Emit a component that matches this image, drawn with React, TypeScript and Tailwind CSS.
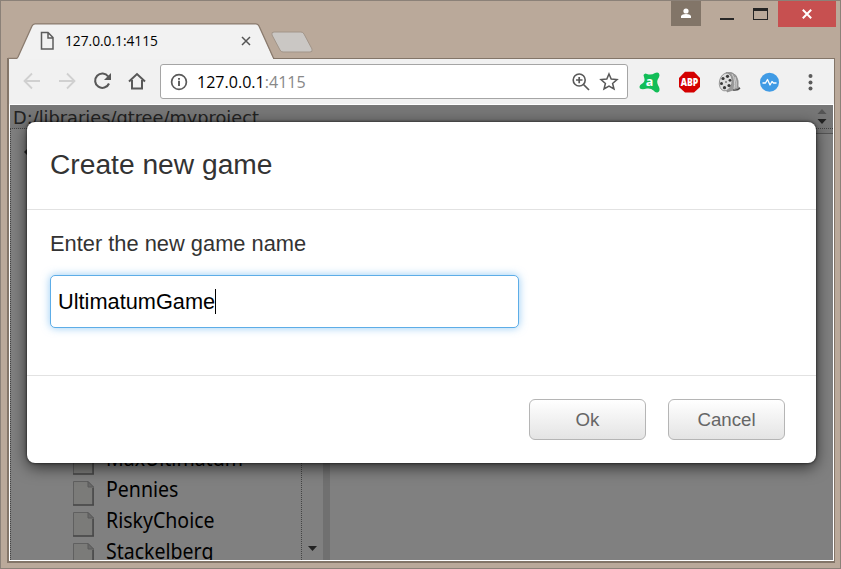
import React from 'react';

function TreeRow({ name }: { name: string }) {
  return (
    <div className="flex h-[31px] items-start pl-[62px]">
      <svg width="21" height="25" viewBox="0 0 21 25" className="mt-[6px] shrink-0">
        <path d="M.5 .5H15L20.5 6V24H.5Z" fill="#7b7b79" stroke="#606060" />
        <path d="M15 .5V6H20.5Z" fill="#696969" stroke="#5b5b5b" />
        <path d="M0 24H21M20 7V24" stroke="#484848" strokeWidth="1.5" />
      </svg>
      <span className="-mt-px ml-[12px] origin-left scale-x-[0.93] whitespace-nowrap font-['Noto_Sans',sans-serif] text-[21px] leading-[31px] text-black">{name}</span>
    </div>
  );
}

function Titlebar() {
  return (
    <header className="relative flex h-[57px] shrink-0">
      <svg className="absolute left-0 top-0" width="330" height="58" viewBox="1 1 330 58" fill="none">
        <path d="M17 59L18 57L32 26Q33 24 35 24H256Q258 24 259 26L273 58V59Z" fill="#f2f2f2" />
        <path d="M8 58.5H16Q17 58.5 18 57L32 26Q33 23.8 35 23.8H256Q258 23.8 259 26L273 57L274 58.5" stroke="#8a7b6e" strokeWidth="1.3" />
        <path d="M274 32H301Q303 32 304 34L312 49Q313 52 310 52H283Q281 52 280 50L272 35Q271 32 274 32Z" fill="#cac7c4" stroke="#a29589" />
        <path d="M41.5 32.5H48L53 37.5V49H41.5ZM48 33V38H53" stroke="#5d5d5d" strokeWidth="1.5" />
        <path d="M242 37L250 45M250 37L242 45" stroke="#555" strokeWidth="1.5" />
      </svg>
      <div className="relative ml-[64px] mt-[29px] flex h-[20px] items-center">
        <span className="origin-left scale-x-[0.98] font-['Open_Sans',sans-serif] text-[14px] text-black">127.0.0.1:4115</span>
      </div>
      <div className="ml-auto mr-[4px] flex h-[26px]">
        <div className="flex h-[25px] w-[30px] justify-center bg-[#827568] pt-[7px]">
          <svg width="10" height="11"><circle cx="5" cy="3" r="2.6" fill="#fff" /><path d="M0 10V8Q1 6 5 6T10 8V10Z" fill="#fff" /></svg>
        </div>
        <div className="flex w-[49px] pl-[19px] pt-[17px]"><div className="h-[2px] w-[14px] bg-[#282828]" /></div>
        <div className="flex w-[28px] pl-[3px] pt-[7px]"><div className="h-[12px] w-[15px] border border-t-[3px] border-[#242424]" /></div>
        <div className="flex w-[58px] justify-center bg-[#c75050] pt-[8px]">
          <svg width="10" height="10"><path d="M.8 .8L9.2 9.2M9.2 .8L.8 9.2" stroke="#fff" strokeWidth="2" /></svg>
        </div>
      </div>
    </header>
  );
}

function Toolbar() {
  return (
    <nav className="flex h-[46px] shrink-0 items-center border-b border-[#aaa] bg-[#f1f1f1]">
      <svg width="142" height="24" viewBox="19 70 142 24" fill="none" className="ml-[10px] shrink-0">
        <path d="M40 81H25M32 73.5L24.5 81L32 88.5M59 81H74M67 73.5L74.5 81L67 88.5" stroke="#d0d0d0" strokeWidth="1.8" />
        <path d="M108.2 76.5A7.2 7.2 0 1 0 109 83.5" stroke="#585858" strokeWidth="2.1" />
        <path d="M111 73V80H104Z" fill="#585858" />
        <path d="M129 81.5L137 74L145 81.5M132 80V88.4H142V80" stroke="#585858" strokeWidth="2" />
      </svg>
      <div className="-ml-px flex h-[35px] w-[468px] shrink-0 items-center rounded-[3px] border border-[#a5a5a5] bg-white pl-[9px]">
        <svg width="18" height="18" fill="none"><circle cx="9" cy="9" r="7.4" stroke="#5a5a5a" strokeWidth="1.7" /><path d="M9 7.8V13M9 5V6.7" stroke="#5a5a5a" strokeWidth="1.9" /></svg>
        <div className="ml-[9px] w-[365px] whitespace-nowrap font-['Open_Sans',sans-serif] text-[17px] leading-[30px]">
          <span className="inline-block origin-left scale-x-[0.945] text-black">127.0.0.1<span className="text-[#888]">:4115</span></span>
        </div>
        <svg width="53" height="22" viewBox="570 71 53 22" fill="none" className="ml-[8px]">
          <circle cx="579.2" cy="80" r="6" stroke="#585858" strokeWidth="1.6" />
          <path d="M583.5 84.5L589 90M576 80H582.5M579.2 77V83.2" stroke="#585858" strokeWidth="1.7" />
          <path d="M609 74L611.2 79.1L617 79.6L612.6 83.4L614 89L609 86L604 89L605.4 83.4L601 79.6L606.8 79.1Z" stroke="#585858" strokeWidth="1.5" />
        </svg>
      </div>
      <svg width="205" height="28" viewBox="628 67 205 28" fill="none" className="shrink-0">
        <path d="M643.5 74Q645 71.5 647 73Q651 74.5 655 72Q659 70.5 659.5 74Q659.5 76 657.5 79Q656.5 82 659 86Q660.5 90 658 91.2Q655.5 92 653.5 89.5Q651 87 647 87.5Q642 89 640 87.5Q638.5 85 641.5 83Q645 81 644.5 78Z" fill="#12bd57" />
        <text x="645.8" y="84.7" fill="white" fontSize="12.5" fontWeight="700" fontFamily="Open Sans, sans-serif">a</text>
        <path d="M685 70.8H694L700 77V86L694 91.5H685L679 86V77Z" fill="#d40000" />
        <text x="680.8" y="85" fill="white" fontSize="10.5" fontWeight="800" fontFamily="Open Sans, sans-serif" textLength="17.5" lengthAdjust="spacingAndGlyphs">ABP</text>
        <path d="M726 71.5Q732 70 736 74.5Q739 79 738 85.5L740 87Q739 90 735 88.5L727 91Z" fill="#999" stroke="#888" strokeWidth=".7" />
        <path d="M732 73Q736 79 734 88M735 76Q737 81 736 87" stroke="#ddd" strokeWidth=".8" />
        <path d="M733 89Q737 90 740 87" stroke="#444" strokeWidth="1.2" />
        <ellipse cx="725.7" cy="81" rx="6.3" ry="9" transform="rotate(12 725.7 81)" fill="#ddd" stroke="#888" strokeWidth=".8" />
        <g fill="#383838"><circle cx="727.5" cy="75.3" r="1.6" /><circle cx="723" cy="77.5" r="1.6" /><circle cx="721.5" cy="82.5" r="1.5" /><circle cx="724.5" cy="86.7" r="1.6" /><circle cx="729" cy="84.5" r="1.6" /><circle cx="730" cy="79.3" r="1.4" /><circle cx="726" cy="81" r=".8" /></g>
        <circle cx="769.5" cy="81.2" r="9.5" fill="#409be5" />
        <path d="M762.5 82H765.5L767.5 78.5L770 84L772 80.5L773.5 82H776.5" stroke="white" strokeWidth="1.3" strokeLinejoin="round" />
        <g fill="#5b5b5b"><circle cx="810.5" cy="75" r="2" /><circle cx="810.5" cy="81.4" r="2" /><circle cx="810.5" cy="87.6" r="2" /></g>
      </svg>
    </nav>
  );
}

function Dialog() {
  return (
    <section role="dialog" className="absolute left-[17px] top-[17px] flex h-[341px] w-[789px] flex-col rounded-[8px] bg-white font-['Liberation_Sans',sans-serif] shadow-[0_4px_16px_rgba(0,0,0,0.65),0_0_3px_rgba(0,0,0,0.8)]">
      <div className="h-[88px] border-b border-[#e2e2e2] pl-[23px] pt-[25px]">
        <h1 className="whitespace-nowrap text-[28.2px] leading-[34px] text-[#333]">Create new game</h1>
      </div>
      <div className="h-[166px] border-b border-[#e2e2e2] pl-[23px] pt-[20px]">
        <p className="text-[21.85px] leading-[28px] text-[#333]">Enter the new game name</p>
        <div className="mt-[17px] flex h-[53px] w-[469px] items-center rounded-[5px] border border-[#5dade7] bg-white pl-[7px] shadow-[0_0_8px_rgba(82,168,236,0.6)]">
          <span className="pt-[2px] text-[21.75px] text-black">UltimatumGame</span><span className="h-[25px] w-px bg-black" />
        </div>
      </div>
      <div className="flex gap-[22px] pl-[502px] pt-[23px]">
        {['Ok', 'Cancel'].map(label => (
          <button key={label} className="h-[41px] w-[117px] rounded-[6px] border border-[#b5b5b5] bg-linear-to-b from-white to-[#e4e4e4] pt-px text-[18.7px] text-[#666]">{label}</button>
        ))}
      </div>
    </section>
  );
}

export default function App() {
  return (
    <main className="flex h-[569px] w-[841px] flex-col overflow-hidden border border-[#8b8178] bg-[#baa99a]">
      <Titlebar />
      <div className="ml-[6px] mr-[5px] flex h-[505px] flex-col border-2 border-r border-t border-[#837568]">
        <Toolbar />
        <div className="relative mx-px flex h-[455px] shrink-0 flex-col overflow-hidden bg-[#808080] shadow-[0_0_0_1px_white]">
          <div className="flex h-[24px] shrink-0 border-b border-dotted border-[#444] bg-[#777]">
            <span className="ml-[3px] whitespace-nowrap pt-px font-['DejaVu_Sans',sans-serif] text-[17px] leading-[24px] text-[#222]">
              <span className="inline-block origin-left scale-x-[1.045]">D:/libraries/gtree/myproject</span>
            </span>
            <svg width="20" height="24" className="ml-auto shrink-0"><path d="M4.5 9L9 4L13.5 9Z" fill="#555" /><path d="M4.5 14H13.5L9 19Z" fill="#222" /></svg>
          </div>
          <div className="flex h-[431px]">
            <div className="w-[292px] border-x border-dotted border-[#444]">
              <svg width="20" height="30" className="mt-[11px]"><path d="M13 12L18 7V17Z" fill="#222" /></svg>
              <div className="h-[274px]" />
              <TreeRow name="MaxUltimatum" />
              <TreeRow name="Pennies" />
              <TreeRow name="RiskyChoice" />
              <TreeRow name="Stackelberg" />
            </div>
            <div className="flex w-[21px] items-end pb-[8px] pl-[6px]"><svg width="10" height="6"><path d="M0 0H9L4.5 5Z" fill="#222" /></svg></div>
            <div className="w-[7px] bg-[#707070]" />
            <div className="h-[5px] grow border-b border-[#555] bg-[#777]" />
          </div>
          <Dialog />
        </div>
        <div className="h-px shrink-0 bg-white" />
      </div>
    </main>
  );
}
